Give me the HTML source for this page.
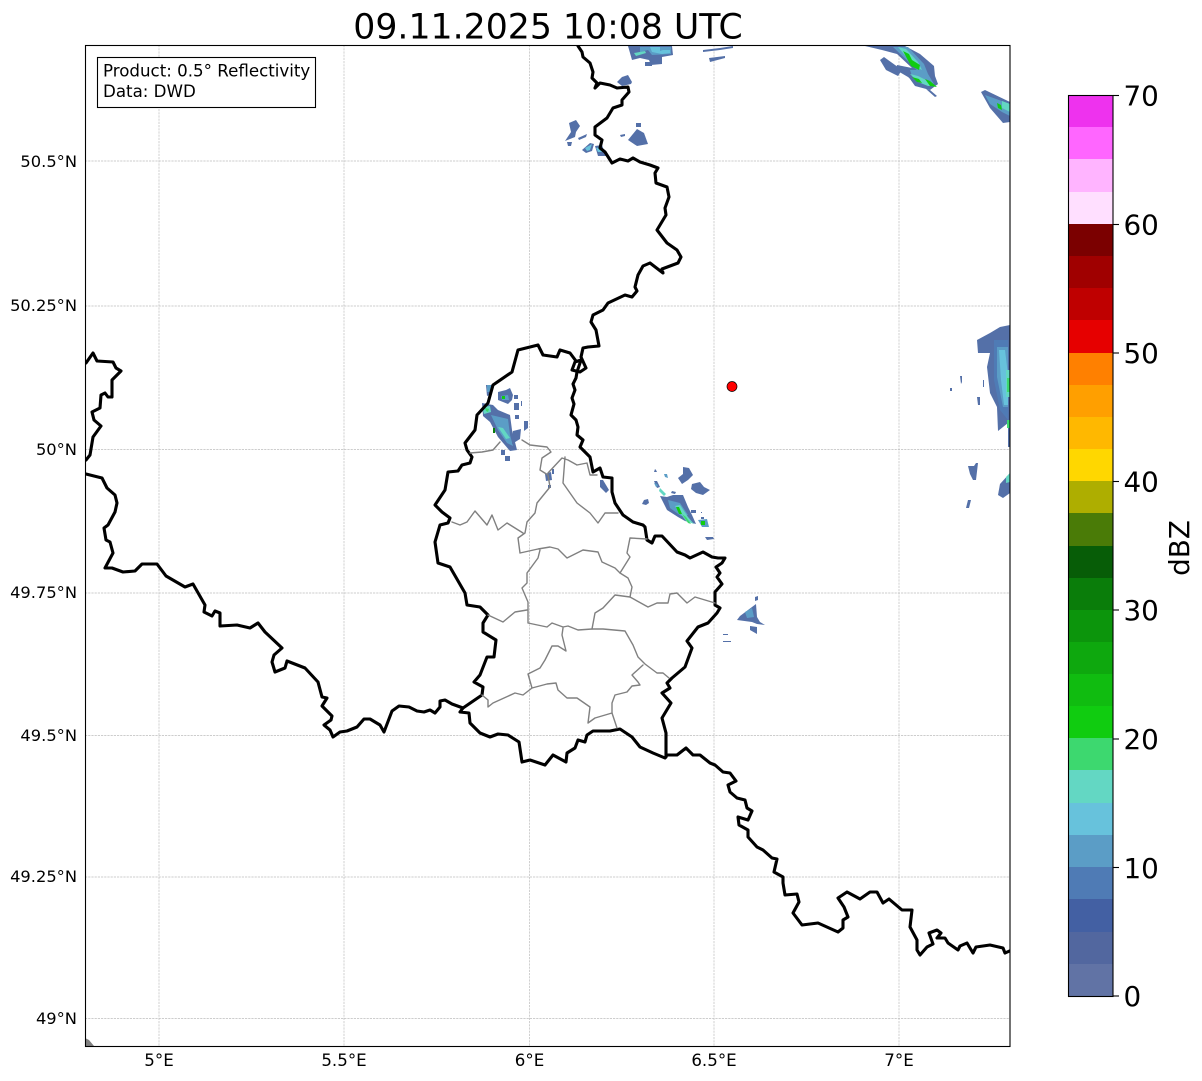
<!DOCTYPE html>
<html><head><meta charset="utf-8"><style>
html,body{margin:0;padding:0;background:#fff}
svg{display:block}
text{font-family:"DejaVu Sans","Liberation Sans",sans-serif;fill:#000}
.t{font-size:16.67px}
.y{font-size:16.3px}
.c{font-size:27.8px}
.b{fill:none;stroke:#000;stroke-width:3.1;stroke-linejoin:round;stroke-linecap:round}
.g{fill:none;stroke:#808080;stroke-width:1.4;stroke-linejoin:round;stroke-linecap:round}
.gl{stroke:#bdbdbd;stroke-width:.7;stroke-dasharray:2.2 1}
.r1{fill:#5470a8}.r2{fill:#4f7bb5}.r3{fill:#5b9dc6}.r4{fill:#67c2dc}.r5{fill:#63d7c3}.r6{fill:#3dd86f}.r7{fill:#10cc10}
</style></head><body>
<svg width="1202" height="1081" viewBox="0 0 1202 1081" xmlns="http://www.w3.org/2000/svg">
<rect width="1202" height="1081" fill="#fff"/>
<defs><clipPath id="ax"><rect x="85.5" y="45.5" width="924.5" height="1000.5"/></clipPath></defs>

<g class="gl">
<line x1="159" y1="45" x2="159" y2="1046"/><line x1="344" y1="45" x2="344" y2="1046"/><line x1="529.5" y1="45" x2="529.5" y2="1046"/><line x1="714" y1="45" x2="714" y2="1046"/><line x1="899" y1="45" x2="899" y2="1046"/>
<line x1="85" y1="161" x2="1010" y2="161"/><line x1="85" y1="306" x2="1010" y2="306"/><line x1="85" y1="449.5" x2="1010" y2="449.5"/><line x1="85" y1="593" x2="1010" y2="593"/><line x1="85" y1="735.5" x2="1010" y2="735.5"/><line x1="85" y1="877" x2="1010" y2="877"/><line x1="85" y1="1018.5" x2="1010" y2="1018.5"/>
</g>

<g clip-path="url(#ax)">
<!-- top centre -->
<polygon class="r1" points="628,46 672,46 673,55 662,57 662,64 651,65 649,60 640,58 632,60"/>
<polygon class="r1" points="645,62 652,62 652,66 645,66"/>
<polygon class="r3" points="640,47 671,47 671,54 652,55 648,50 640,52"/>
<polygon class="r4" points="650,47 660,47 660,51 663,50 670,50 670,53 662,54 652,52"/>
<polygon class="r5" points="634,53 645,51 646,53 636,56"/>
<polygon class="r1" points="703,50 720,48 733,46 733,48 720,50 703,52"/>
<polygon class="r1" points="709,58 725,56 725,58 710,62"/>
<polygon class="r1" points="617,82 622,77 628,75 632,82 631,84 622,86"/>
<polygon class="r1" points="569,123 576,120 580,126 576,132 575,137 565,141 571,132"/>
<polygon class="r1" points="578,138 587,134 586,137 579,140"/>
<polygon class="r1" points="567,142 572,142 571,146 568,146"/>
<polygon class="r1" points="582,150 590,143 594,144 592,151 586,153"/>
<polygon class="r4" points="585,148 592,144 590,150 587,151"/>
<polygon class="r1" points="595,146 602,145 606,156 598,156"/>
<polygon class="r4" points="596,148 601,147 602,152 598,152"/>
<polygon class="r1" points="628,140 637,129 644,133 648,144 637,146"/>
<polygon class="r1" points="636,123 641,123 641,127 636,127"/>
<polygon class="r1" points="620,135 625,134 625,136 621,137"/>
<!-- NE -->
<polygon class="r1" points="865,46 905,46 920,54 934,66 935,76 938,84 930,88 918,85 908,77 896,70 897,65 912,68 897,54 882,50"/>
<polygon class="r1" points="880,60 884,57 902,70 898,76 886,70"/>
<polygon class="r1" points="905,72 920,76 938,84 930,90 915,86"/>
<polygon class="r1" points="926,89 930,90 937,96 935,97"/>
<polygon class="r3" points="893,47 908,47 924,64 928,74 934,84 922,83 912,76 910,70 917,70"/>
<polygon class="r5" points="898,47 906,49 918,62 922,70 914,66"/>
<polygon class="r7" points="903,51 909,54 912,60 920,65 919,70 911,66"/>
<polygon class="r5" points="910,74 918,76 930,82 936,86 928,86 918,82"/>
<polygon class="r7" points="912,77 919,79 922,83 917,82"/>
<polygon class="r7" points="925,79 930,81 937,87 930,86"/>
<polygon class="r1" points="981,92 985,90 1010,102 1010,122 1003,123 990,108"/>
<polygon class="r3" points="985,95 1010,104 1010,116 1002,112 990,104"/>
<polygon class="r5" points="1002,101 1010,104 1010,112 1002,108"/>
<polygon class="r7" points="997,103 1001,105 1002,110 998,108"/>
<!-- E edge -->
<polygon class="r1" points="977,340 990,333 1000,327 1010,325 1010,447 1008,447 1008,423 998,431 997,407 990,393 987,367 990,353 978,353"/>
<polygon class="r2" points="994,340 1008,340 1008,420 1000,410 994,380"/>
<polygon class="r3" points="997,347 1008,347 1008,407 1003,407 997,377"/>
<polygon class="r4" points="999,350 1005,350 1008,375 1008,405 1004,405 1001,380"/>
<polygon class="r5" points="1006,370 1010,370 1010,397 1006,397"/>
<polygon class="r6" points="1007,378 1010,378 1010,392 1007,392"/>
<polygon class="r6" points="1007,420 1010,420 1010,428 1007,428"/>
<polygon class="r1" points="960,376 962,376 962,382 961,384"/><rect x="950" y="388" width="2" height="3" class="r1"/>
<rect x="983" y="380" width="1" height="7" class="r1"/><polygon class="r1" points="977,397 980,397 980,405 978,405"/>
<polygon class="r1" points="968,466 974,466 976,463 978,463 976,480 973,480 970,474"/>
<polygon class="r1" points="968,500 971,500 969,508 966,508"/>
<polygon class="r1" points="1000,484 1010,473 1010,493 1003,498 998,495"/>
<polygon class="r5" points="1006,477 1010,473 1010,482 1006,483"/>
<!-- W Lux -->
<polygon class="r1" points="486,385 492,385 492,394 487,396"/>
<polygon class="r3" points="487,385 491,385 491,392 487,392"/>
<polygon class="r1" points="498,392 506,390 510,388 513,395 512,400 508,404 498,400"/>
<polygon class="r3" points="501,396 508,395 509,400 502,400"/>
<polygon class="r7" points="502,396 505,396 505,399 502,399"/>
<polygon class="r1" points="482,403 493,405 498,410 510,415 512,430 517,450 510,451 498,437 490,422 483,416"/>
<polygon class="r3" points="491,415 508,419 510,435 513,446 507,443 498,430"/>
<polygon class="r5" points="482,407 490,406 491,412 484,414"/>
<polygon class="r6" points="485,408 489,409 488,412 486,411"/>
<polygon class="r5" points="498,427 503,428 510,438 506,439"/>
<rect x="493" y="428" width="2" height="5" fill="#0a7d0a"/>
<rect x="514" y="403" width="5" height="7" class="r1"/><rect x="521" y="401" width="1" height="5" class="r1"/><rect x="514" y="395" width="4" height="4" class="r1"/>
<polygon class="r1" points="524,421 528,421 528,428 524,431"/><polygon class="r1" points="513,431 521,429 520,439 512,444"/>
<rect x="515" y="415" width="4" height="4" class="r1"/>
<rect x="501" y="450" width="4" height="5" class="r1"/><rect x="505" y="456" width="5" height="5" class="r1"/>
<!-- mid -->
<polygon class="r1" points="600,480 603,480 609,490 606,493 600,487"/>
<polygon class="r1" points="545,474 551,472 552,480 546,481"/><rect x="552" y="469" width="2" height="5" class="r1"/><rect x="548" y="485" width="3" height="3" class="r1"/>
<!-- E storm -->
<polygon class="r1" points="655,469 656,470 657,472 654,472"/><polygon class="r3" points="664,474 667,474 668,478 665,477"/>
<polygon class="r1" points="654,481 657,481 660,487 657,488"/><polygon class="r3" points="654,483 657,484 658,486 656,487"/>
<polygon class="r5" points="660,488 666,494 664,496 659,491"/>
<polygon class="r1" points="678,478 683,474 683,467 689,468 693,475 688,480 682,484"/>
<polygon class="r1" points="692,484 700,482 704,487 710,490 703,495 696,493 691,489"/>
<polygon class="r1" points="672,491 676,492 675,494 671,493"/>
<polygon class="r1" points="660,496 667,497 673,495 683,495 688,507 692,515 696,524 685,521 678,517 667,510"/>
<polygon class="r3" points="668,500 680,503 688,515 681,516 670,508"/>
<polygon class="r5" points="675,506 680,505 688,517 694,524 686,521"/>
<polygon class="r7" points="676,507 679,507 682,514 679,514"/>
<polygon class="r6" points="682,514 686,517 691,524 688,523"/>
<polygon class="r1" points="644,500 648,499 649,503 646,505 642,504"/>
<rect x="691" y="510" width="5" height="3" class="r1"/><rect x="701" y="512" width="1" height="1" class="r1"/>
<rect x="701" y="517" width="3" height="2" class="r1"/>
<polygon class="r3" points="698,520 707,519 709,527 702,527"/>
<polygon class="r7" points="701,521 705,521 705,525 701,525"/>
<polygon class="r1" points="705,537 713,537 714,539 707,540"/>
<polygon class="r1" points="755,597 758,596 758,600 755,601"/>
<polygon class="r1" points="748,610 756,604 757,617 760,622 765,625 757,624 752,622 737,620 740,616"/>
<polygon class="r3" points="745,612 752,608 754,617 747,618"/>
<polygon class="r1" points="750,626 757,627 757,634 750,630"/>
<rect x="723" y="634" width="5" height="1" class="r1"/><rect x="723" y="641" width="8" height="1" class="r1"/>
</g>

<g clip-path="url(#ax)">
<!-- France -->
<path class="b" d="M86,474 L102,478 L107,488 L115,495 L117,503 L115,512 L108,525 L104,528 L106,540 L110,542 L113,553 L105,568 L112,568 L123,572 L135,571 L142,564 L157,564 L166,576 L185,587 L193,584 L205,605 L204,612 L212,616 L215,611 L220,613 L220,626 L237,625 L250,628 L258,623 L265,632 L282,648 L274,655 L272,662 L275,672 L285,668 L287,661 L305,668 L318,682 L322,697 L327,698 L322,706 L332,716 L331,720 L324,725 L330,730 L333,737 L340,732 L347,731 L357,727 L364,719 L370,719 L380,725 L384,732 L392,711 L399,706 L409,707 L417,711 L424,712 L430,710 L435,713 L440,707 L440,701 L445,700 L452,704 L463,708"/>
<path class="b" d="M86,363 L93,353 L97,361 L113,362 L116,368 L121,371 L112,380 L112,397 L108,397 L105,393 L101,395 L100,408 L92,412 L94,420 L101,426 L93,437 L90,455 L86,460"/>
<!-- Germany north -->
<path class="b" d="M578,46 L582,52 L583,57 L590,63 L593,72 L592,78 L597,83 L595,88 L600,83 L610,85 L617,88 L628,87 L629,92 L622,100 L622,105 L613,108 L607,118 L595,127 L595,135 L602,140 L600,148 L605,152 L612,163 L620,159 L628,161 L633,158 L640,162 L650,165 L658,168 L655,173 L656,183 L667,187 L669,197 L665,208 L666,215 L657,230 L667,243 L677,250 L681,257 L678,263 L662,269 L663,273 L650,263 L643,266 L638,275 L635,287 L637,291 L632,297 L625,295 L608,303 L603,310 L593,315 L591,322 L596,330 L599,346 L588,347 L583,348 L581,357 L586,368 L580,372 L572,370 L575,362 L581,360 L577,372 L576,378 L573,384 L575,390 L572,398 L574,404 L571,415 L576,420 L578,427 L577,435 L583,440 L580,447 L590,457 L593,472 L600,468 L603,477 L612,478 L612,492 L615,503 L623,515 L633,522 L643,525 L645,527 L647,540 L652,543 L655,536 L662,536 L677,552 L685,555 L690,558 L703,552 L712,557 L718,558 L725,558 L722,563 L716,567 L720,573 L717,577 L722,584 L715,592 L715,605 L720,608 L717,613 L708,623 L698,627 L687,641 L692,648 L685,667 L672,678 L667,683 L670,688 L662,693 L671,703 L662,718 L666,733 L666,757"/>
<!-- Lux west/north -->
<path class="b" d="M576,361 L570,353 L560,350 L557,357 L543,355 L538,345 L518,350 L512,372 L493,385 L488,403 L477,415 L475,430 L465,443 L467,450 L472,457 L470,463 L462,465 L458,471 L448,472 L445,490 L435,505 L442,512 L450,518 L448,523 L440,525 L435,542 L438,563 L450,567 L465,593 L467,605 L480,607 L488,615 L483,623 L483,632 L496,640 L494,657 L487,657 L480,675 L474,682 L483,687 L482,695 L463,708 L460,712 L469,713 L470,723 L480,733 L490,737 L498,734 L508,735 L519,742 L522,762 L530,760 L545,765 L553,755 L566,762 L567,753 L575,748 L578,740 L585,742 L587,735 L593,731 L610,731 L620,729 L632,737 L640,747 L653,753 L665,758 L667,755 L677,755 L686,748 L693,755 L700,755 L710,763 L715,765 L723,772 L730,773 L736,781 L728,785 L730,792 L737,798 L745,800 L747,808 L752,811 L748,820 L738,817 L739,825 L748,830 L748,837 L757,847 L763,850 L772,858 L777,859 L774,872 L783,877 L783,883 L785,895 L797,894 L799,902 L793,913 L802,925 L818,923 L838,932 L843,928 L843,920 L848,917 L844,907 L838,898 L847,892 L860,899 L870,892 L877,892 L883,903 L889,899 L902,910 L912,910 L910,927 L917,940 L917,950 L920,955 L927,947 L933,944 L929,933 L937,930 L941,933 L937,938 L945,938 L948,943 L958,950 L960,946 L967,943 L973,953 L976,947 L990,945 L1003,948 L1005,953 L1012,950"/>
<!-- cantons -->
<path class="g" d="M470,453 L482,452 L493,450 L500,442"/>
<path class="g" d="M522,440 L530,445 L547,447 L551,452 L542,458 L540,470 L548,475 L550,487 L537,503 L535,513 L527,522 L525,533 L518,538 L520,553 L538,549 L550,547 L558,549 L567,558 L583,550 L598,552 L602,562 L615,568 L620,573"/>
<path class="g" d="M452,522 L460,525 L467,522 L475,511 L487,525 L492,515 L498,530 L507,523 L523,533"/>
<path class="g" d="M548,473 L562,458 L568,460 L577,465 L587,463 L590,475 L597,475"/>
<path class="g" d="M565,457 L563,483 L577,503 L590,513 L598,523 L605,513 L618,513"/>
<path class="g" d="M647,539 L630,538 L627,553 L630,557 L620,573 L628,578 L632,587 L630,597"/>
<path class="g" d="M540,550 L538,558 L527,573 L527,583 L522,588 L528,602 L528,623 L547,627 L552,623 L563,627 L568,626 L578,630 L592,629 L603,629 L625,631 L633,645 L638,657 L645,664 L657,673 L663,673 L669,678"/>
<path class="g" d="M563,628 L562,635 L566,651 L558,646 L552,646 L545,660 L540,668 L528,674 L532,688 L547,684 L556,683 L558,690 L567,698 L577,698 L590,707 L588,723 L595,718 L612,713 L612,703 L615,695 L627,692 L632,686 L640,685 L638,682 L632,675 L643,665"/>
<path class="g" d="M612,713 L617,728"/>
<path class="g" d="M592,629 L595,613 L603,608 L615,595 L630,597 L648,607 L657,603 L668,603 L670,594 L677,593 L687,603 L695,597 L715,603"/>
<path class="g" d="M488,615 L503,622 L515,612 L527,610"/>
<path class="g" d="M482,695 L488,700 L488,707 L493,703 L515,693 L523,695 L532,688"/>
<polygon points="85,1038 89,1040 94,1046 85,1046" fill="#808080"/>
</g>

<circle cx="732" cy="386.5" r="5" fill="#f00" stroke="#000" stroke-width=".7"/>
<rect x="85.5" y="45.5" width="924.5" height="1001" fill="none" stroke="#000" stroke-width="1.1"/>

<rect x="97.5" y="57.5" width="218" height="50" fill="#fff" stroke="#000" stroke-width="1.1"/>
<text class="t" x="103" y="76.5">Product: 0.5° Reflectivity</text>
<text class="t" x="103" y="97">Data: DWD</text>

<text x="548" y="38.5" text-anchor="middle" font-size="34.7">09.11.2025 10:08 UTC</text>

<g class="y" text-anchor="end">
<text x="77" y="167">50.5°N</text><text x="77" y="311">50.25°N</text><text x="77" y="455">50°N</text><text x="77" y="598">49.75°N</text><text x="77" y="741">49.5°N</text><text x="77" y="882">49.25°N</text><text x="77" y="1024">49°N</text>
</g>
<g class="t" text-anchor="middle">
<text x="159" y="1066">5°E</text><text x="344" y="1066">5.5°E</text><text x="529.5" y="1066">6°E</text><text x="714" y="1066">6.5°E</text><text x="899" y="1066">7°E</text>
</g>

<!-- colorbar -->
<g shape-rendering="crispEdges">
<rect x="1068" y="964" width="45" height="32.5" fill="#6173a5"/>
<rect x="1068" y="932" width="45" height="32" fill="#52679f"/>
<rect x="1068" y="899" width="45" height="33" fill="#4360a3"/>
<rect x="1068" y="867" width="45" height="32" fill="#4f7bb5"/>
<rect x="1068" y="835" width="45" height="32" fill="#5b9dc6"/>
<rect x="1068" y="803" width="45" height="32" fill="#67c2dc"/>
<rect x="1068" y="770" width="45" height="33" fill="#63d7c3"/>
<rect x="1068" y="738" width="45" height="32" fill="#3dd86f"/>
<rect x="1068" y="706" width="45" height="32" fill="#10cc10"/>
<rect x="1068" y="674" width="45" height="32" fill="#10bc10"/>
<rect x="1068" y="642" width="45" height="32" fill="#0ea80e"/>
<rect x="1068" y="610" width="45" height="32" fill="#0c950c"/>
<rect x="1068" y="578" width="45" height="32" fill="#0a7d0a"/>
<rect x="1068" y="546" width="45" height="32" fill="#075d07"/>
<rect x="1068" y="513" width="45" height="33" fill="#4a7b07"/>
<rect x="1068" y="481" width="45" height="32" fill="#aeae00"/>
<rect x="1068" y="449" width="45" height="32" fill="#ffd700"/>
<rect x="1068" y="417" width="45" height="32" fill="#ffb800"/>
<rect x="1068" y="385" width="45" height="32" fill="#ff9f00"/>
<rect x="1068" y="353" width="45" height="32" fill="#ff8000"/>
<rect x="1068" y="320" width="45" height="33" fill="#e60000"/>
<rect x="1068" y="288" width="45" height="32" fill="#bf0000"/>
<rect x="1068" y="256" width="45" height="32" fill="#a00000"/>
<rect x="1068" y="224" width="45" height="32" fill="#7b0000"/>
<rect x="1068" y="192" width="45" height="32" fill="#ffdfff"/>
<rect x="1068" y="159" width="45" height="33" fill="#ffb4ff"/>
<rect x="1068" y="127" width="45" height="32" fill="#ff66ff"/>
<rect x="1068" y="95.5" width="45" height="31.5" fill="#ee32ee"/>
</g>
<rect x="1068.5" y="95.5" width="44.5" height="901" fill="none" stroke="#000" stroke-width="1.1"/>
<g stroke="#000" stroke-width="1.1">
<line x1="1113" y1="95.5" x2="1119" y2="95.5"/><line x1="1113" y1="224.5" x2="1119" y2="224.5"/><line x1="1113" y1="353" x2="1119" y2="353"/><line x1="1113" y1="481.5" x2="1119" y2="481.5"/><line x1="1113" y1="610" x2="1119" y2="610"/><line x1="1113" y1="739" x2="1119" y2="739"/><line x1="1113" y1="867.5" x2="1119" y2="867.5"/><line x1="1113" y1="996" x2="1119" y2="996"/>
</g>
<g class="c">
<text x="1123.5" y="105.5">70</text><text x="1123.5" y="234.5">60</text><text x="1123.5" y="363">50</text><text x="1123.5" y="491.5">40</text><text x="1123.5" y="620">30</text><text x="1123.5" y="749">20</text><text x="1123.5" y="878">10</text><text x="1123.5" y="1006">0</text>
</g>
<text class="c" transform="translate(1189,548) rotate(-90)" text-anchor="middle">dBZ</text>
</svg>
</body></html>
